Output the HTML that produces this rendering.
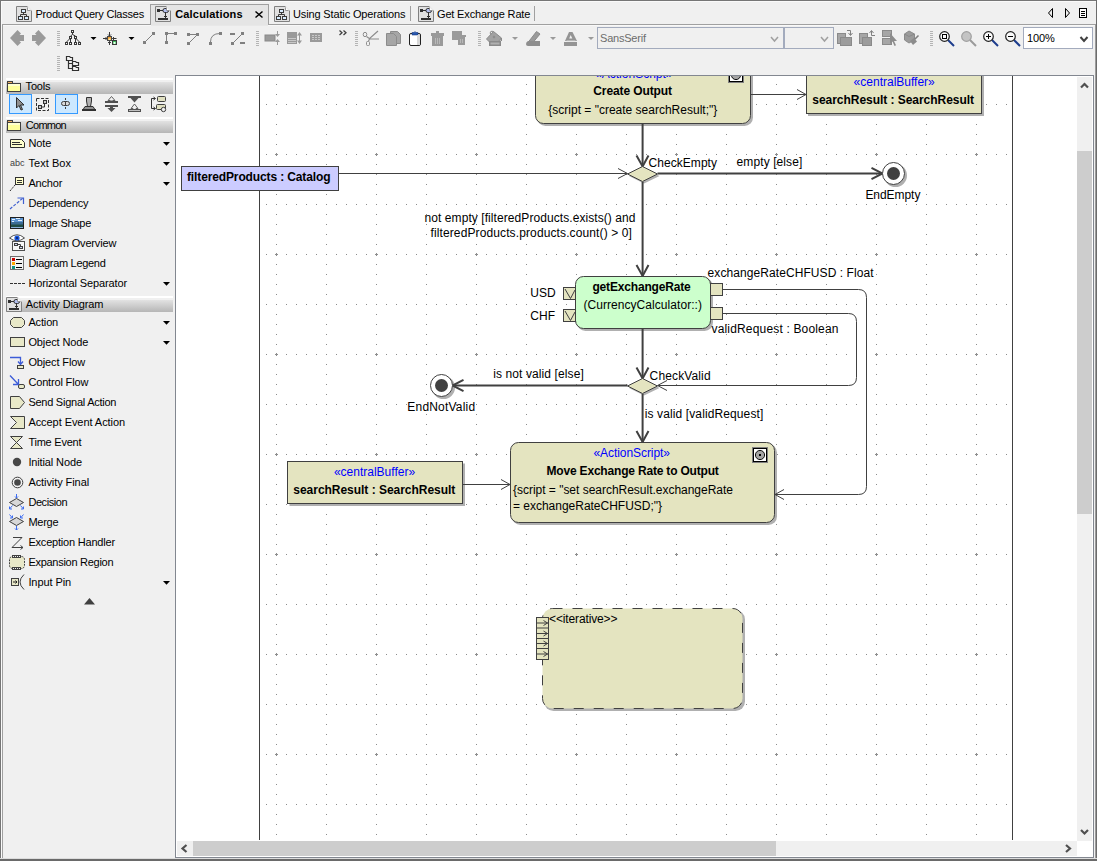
<!DOCTYPE html>
<html><head><meta charset="utf-8"><title>Calculations</title>
<style>
html,body{margin:0;padding:0}
body{width:1097px;height:861px;background:#f0f0f0;position:relative;overflow:hidden;font-family:"Liberation Sans",sans-serif;font-size:11px;color:#000}
.a{position:absolute}
.t{position:absolute;white-space:pre;line-height:14px;height:14px;letter-spacing:-0.2px}
.hdr{position:absolute;left:6px;width:167px;height:16px;background:linear-gradient(#fff 0,#fff 2px,#f0f0f0 2px,#f0f0f0 4px,#e2e2e2 4px,#b6b6b6 16px)}
.it{position:absolute;left:28px;white-space:pre;line-height:14px;height:14px;letter-spacing:-0.2px}
.dd{position:absolute;left:163px;margin-top:1px;width:0;height:0;border-left:3.5px solid transparent;border-right:3.5px solid transparent;border-top:4px solid #000}
.grip{position:absolute;width:3px;height:15px;background:repeating-linear-gradient(#b4b4b4 0,#b4b4b4 1px,transparent 1px,transparent 2px)}
.combo{position:absolute;top:27px;height:20px;border:1px solid #a3abbd;background:#f0f0f0}
svg{position:absolute;overflow:visible}
svg text{font-family:"Liberation Sans",sans-serif;font-size:12px;fill:#000}
</style></head><body>
<!-- window borders -->
<div class="a" style="left:0;top:0;width:1097px;height:1px;background:#767676"></div>
<div class="a" style="left:1px;top:1px;width:1095px;height:1px;background:#fafafa"></div>
<div class="a" style="left:0;top:0;width:1px;height:861px;background:#767676"></div>
<div class="a" style="left:1px;top:1px;width:1px;height:858px;background:#fafafa"></div>
<div class="a" style="left:2px;top:24px;width:1px;height:834px;background:#a0a0a0"></div>
<div class="a" style="left:1095px;top:24px;width:1px;height:834px;background:#9c9c9c"></div>
<div class="a" style="left:1096px;top:0;width:1px;height:861px;background:#6c6c6c"></div>
<div class="a" style="left:0;top:858px;width:1097px;height:1px;background:#dcdcdc"></div>
<div class="a" style="left:0;top:859px;width:1097px;height:2px;background:#6a6a6a"></div>

<!-- TABBAR -->
<div id="tabs">
<div class="a" style="left:2px;top:24px;width:1093px;height:1px;background:#a0a0a0"></div>
<div class="a" style="left:3px;top:25px;width:1092px;height:1px;background:#f8f8f8"></div>
<div class="a" style="left:150px;top:4px;width:117px;height:20px;background:#e5e5e5;border:1px solid #a0a0a0;border-bottom:none"></div>
<div class="a" style="left:151px;top:25px;width:117px;height:1px;background:#e8e8e8"></div>
<div class="t" style="left:35.5px;top:7px;letter-spacing:-0.219px">Product Query Classes</div>
<div class="t" style="left:175.2px;top:7px;font-weight:bold;letter-spacing:0.183px">Calculations</div>
<div class="t" style="left:293px;top:7px;letter-spacing:-0.138px">Using Static Operations</div>
<div class="t" style="left:437px;top:7px;letter-spacing:-0.166px">Get Exchange Rate</div>
<div class="a" style="left:410px;top:6px;width:1px;height:15px;background:#a0a0a0"></div>
<div class="a" style="left:534px;top:6px;width:1px;height:15px;background:#a0a0a0"></div>
</div>

<!-- TOOLBAR -->
<div id="toolbar">
<div class="grip" style="left:57px;top:31px"></div><div class="grip" style="left:256px;top:31px"></div><div class="grip" style="left:355px;top:31px"></div><div class="grip" style="left:478px;top:31px"></div><div class="grip" style="left:930px;top:31px"></div><div class="grip" style="left:57px;top:56px"></div>
<div class="combo" style="left:597px;width:185px"></div>
<div class="t" style="left:600px;top:31px;color:#6d6d6d;letter-spacing:-0.211px">SansSerif</div>
<div class="combo" style="left:784px;width:48px"></div>
<div class="combo" style="left:1023px;width:68px;background:#fff"></div>
<div class="t" style="left:1027px;top:31px;letter-spacing:-0.085px">100%</div>
</div>

<!-- PALETTE -->
<div id="palette">
<div class="hdr" style="top:78px"></div><div class="t" style="left:25.6px;top:79px;letter-spacing:-0.178px">Tools</div>
<div class="hdr" style="top:117px"></div><div class="t" style="left:25.8px;top:118px;letter-spacing:-0.737px">Common</div>
<div class="hdr" style="top:296px"></div><div class="t" style="left:25.8px;top:297px;letter-spacing:-0.117px">Activity Diagram</div>
<div class="it" style="left:28.4px;top:136px;letter-spacing:-0.112px">Note</div>
<div class="t" style="left:10px;top:156px;font-size:9px;color:#404040;letter-spacing:0">abc</div><div class="it" style="left:28.4px;top:156px;letter-spacing:0.064px">Text Box</div>
<div class="it" style="left:28.4px;top:176px;letter-spacing:-0.177px">Anchor</div>
<div class="it" style="left:28.4px;top:196px;letter-spacing:-0.178px">Dependency</div>
<div class="it" style="left:28.4px;top:216px;letter-spacing:-0.249px">Image Shape</div>
<div class="it" style="left:28.4px;top:236px;letter-spacing:-0.167px">Diagram Overview</div>
<div class="it" style="left:28.4px;top:256px;letter-spacing:-0.303px">Diagram Legend</div>
<div class="it" style="left:28.4px;top:276px;letter-spacing:-0.115px">Horizontal Separator</div>
<div class="it" style="left:28.4px;top:315px;letter-spacing:-0.146px">Action</div>
<div class="it" style="left:28.4px;top:335px;letter-spacing:-0.123px">Object Node</div>
<div class="it" style="left:28.4px;top:355px;letter-spacing:-0.134px">Object Flow</div>
<div class="it" style="left:28.4px;top:375px;letter-spacing:-0.162px">Control Flow</div>
<div class="it" style="left:28.4px;top:395px;letter-spacing:-0.253px">Send Signal Action</div>
<div class="it" style="left:28.4px;top:415px;letter-spacing:-0.06px">Accept Event Action</div>
<div class="it" style="left:28.4px;top:435px;letter-spacing:-0.233px">Time Event</div>
<div class="it" style="left:28.4px;top:455px;letter-spacing:-0.129px">Initial Node</div>
<div class="it" style="left:28.4px;top:475px;letter-spacing:-0.075px">Activity Final</div>
<div class="it" style="left:28.4px;top:495px;letter-spacing:-0.423px">Decision</div>
<div class="it" style="left:28.4px;top:515px;letter-spacing:-0.258px">Merge</div>
<div class="it" style="left:28.4px;top:535px;letter-spacing:-0.199px">Exception Handler</div>
<div class="it" style="left:28.4px;top:555px;letter-spacing:-0.275px">Expansion Region</div>
<div class="it" style="left:28.4px;top:575px;letter-spacing:-0.08px">Input Pin</div>
</div>

<!-- CANVAS -->
<div class="a" id="canvas" style="left:175px;top:75px;width:917px;height:781px;border:1px solid #828790;background:#fff;overflow:hidden">
<svg id="dg" width="917" height="781" viewBox="176 76 917 781" style="left:0;top:0">
<defs>
<pattern id="g50" x="276" y="104" width="50" height="50" patternUnits="userSpaceOnUse">
<g fill="#8c8c8c"><rect x="0" y="0" width="1" height="1"/><rect x="10" y="0" width="1" height="1"/><rect x="20" y="0" width="1" height="1"/><rect x="30" y="0" width="1" height="1"/><rect x="40" y="0" width="1" height="1"/><rect x="0" y="10" width="1" height="1"/><rect x="0" y="20" width="1" height="1"/><rect x="0" y="30" width="1" height="1"/><rect x="0" y="40" width="1" height="1"/></g>
</pattern>
<pattern id="g100" x="275" y="153" width="100" height="100" patternUnits="userSpaceOnUse">
<g fill="#8c8c8c"><rect x="0" y="1" width="3" height="1"/><rect x="1" y="0" width="1" height="3"/></g>
</pattern>
</defs>
<rect x="266" y="76" width="741" height="765" fill="url(#g50)"/>
<rect x="266" y="76" width="741" height="765" fill="url(#g100)"/>
<g id="frame" stroke="#404040" stroke-width="1" fill="none">
<line x1="259.5" y1="76" x2="259.5" y2="840"/><line x1="1012.5" y1="76" x2="1012.5" y2="840"/>
</g>
<g id="shadows" fill="#b0b0b0" stroke="none">
<rect x="537" y="62" width="216" height="64" rx="8.5"/>
<rect x="808" y="73" width="176" height="43"/>
<rect x="577" y="278" width="136" height="53" rx="8.5"/>
<rect x="512" y="444" width="265" height="81" rx="8.5"/>
<rect x="289.5" y="463.5" width="175.5" height="42.5"/>
<rect x="544" y="610" width="201" height="101" rx="9.5"/>
<path d="M629 176 L644 168.5 L659.5 176 L644 183.5 Z"/>
<path d="M629 388 L644 380.5 L659.5 388 L644 395.5 Z"/>
<circle cx="895.5" cy="175.5" r="11.5"/><circle cx="443.5" cy="387.5" r="11.5"/>
</g>
<g id="edges" stroke="#404040" fill="none">
<g stroke-width="1">
<path d="M751 94.5 H806"/><path d="M797 89.5 L806 94.5 L797 99.5"/>
<path d="M339 173.5 H627"/><path d="M618 168.5 L627.5 173.5 L618 178.5"/>
<path d="M463 484.5 H510"/><path d="M501 479.5 L510 484.5 L501 489.5"/>
<path d="M723 289.5 H858.5 Q866.5 289.5 866.5 297.5 V486.5 Q866.5 494.5 858.5 494.5 H775"/><path d="M784 489.5 L775 494.5 L784 499.5"/>
<path d="M723 313.5 H848.5 Q856.5 313.5 856.5 321.5 V377.5 Q856.5 385.5 848.5 385.5 H658"/><path d="M667 380.5 L657.5 385.5 L667 390.5"/>
</g>
<g stroke-width="2">
<path d="M642.6 124 V166"/><path d="M636.5 155.5 L642.6 166.5 L648.5 155.5"/>
<path d="M642.6 182 V276"/><path d="M636.5 265 L642.6 276 L648.5 265"/>
<path d="M642.6 329 V378"/><path d="M636.5 367.5 L642.6 378.5 L648.5 367.5"/>
<path d="M642.6 394 V442"/><path d="M636.5 431 L642.6 442 L648.5 431"/>
<path d="M657.5 173.5 H882"/><path d="M871.5 167.8 L882.5 173.5 L871.5 179.2"/>
<path d="M627.5 385.5 H453"/><path d="M463.5 379.8 L452.5 385.5 L463.5 391.2"/>
</g>
</g>
<g id="nodes" stroke="#404040" stroke-width="1">
<rect x="535.5" y="60.5" width="215" height="63" rx="8" fill="#e4e4c0"/>
<rect x="806.5" y="71.5" width="175" height="42" fill="#e4e4c0"/>
<rect x="181.5" y="166.5" width="157" height="24" fill="#ccccff"/>
<rect x="575.5" y="276.5" width="135" height="52" rx="8" fill="#ccffcc"/>
<rect x="510.5" y="442.5" width="264" height="80" rx="8" fill="#e4e4c0"/>
<rect x="287.5" y="461.5" width="175" height="42" fill="#e4e4c0"/>
<rect x="542.5" y="608.5" width="200" height="100" rx="10" fill="#e4e4c0" stroke-dasharray="10 10"/>
<path d="M627.5 174 L642.5 166.5 L657.5 174 L642.5 181.5 Z" fill="#e4e4c0"/>
<path d="M627.5 386 L642.5 378.5 L657.5 386 L642.5 393.5 Z" fill="#e4e4c0"/>
<rect x="563.5" y="287.5" width="12" height="12" fill="#e4e4c0"/><path d="M565 289 L570.5 298.5 L575 290" fill="none"/>
<rect x="563.5" y="309.5" width="12" height="12" fill="#e4e4c0"/><path d="M565 311 L570.5 320.5 L575 312" fill="none"/>
<rect x="710.5" y="283.5" width="12" height="12" fill="#e4e4c0"/>
<rect x="710.5" y="307.5" width="12" height="12" fill="#e4e4c0"/>
<circle cx="893.5" cy="173.5" r="11" fill="#fff"/><circle cx="893.5" cy="173.5" r="6.5" fill="#404040" stroke="none"/>
<circle cx="441.5" cy="385.5" r="11" fill="#fff"/><circle cx="441.5" cy="385.5" r="6.5" fill="#404040" stroke="none"/>
<rect x="536.5" y="617.5" width="12" height="42" fill="#e4e4c0"/>
<path d="M536.5 628 H548.5 M536.5 638.5 H548.5 M536.5 648.5 H548.5" fill="none"/>
<path d="M537 623 H548 M543.5 620.5 L547.5 623 L543.5 625.5 M537 633.5 H548 M543.5 631 L547.5 633.5 L543.5 636 M537 643.5 H548 M543.5 641 L547.5 643.5 L543.5 646 M537 654 H548 M543.5 651.5 L547.5 654 L543.5 656.5" fill="none"/>
<g id="bicon1"><rect x="728.5" y="67.5" width="15" height="15" fill="#000" stroke="#808080"/><rect x="730" y="69" width="12" height="12" fill="#fff" stroke="none"/><circle cx="736" cy="75" r="4.6" fill="#a4a4a4" stroke="#101010"/><rect x="735" y="74" width="2" height="2" fill="#000" stroke="none"/></g>
<g id="bicon2"><rect x="752.5" y="447.5" width="15" height="15" fill="#000" stroke="#808080"/><rect x="754" y="449" width="12" height="12" fill="#fff" stroke="none"/><circle cx="760" cy="455" r="4.6" fill="#a4a4a4" stroke="#101010"/><rect x="759" y="454" width="2" height="2" fill="#000" stroke="none"/></g>
</g>
<g id="labels">
<text x="633.8" y="78" text-anchor="middle" style="fill:#0000ff">«ActionScript»</text>
<text x="593.3" y="95" font-weight="bold" textLength="78.7">Create Output</text>
<text x="548.3" y="114">{script = "create searchResult;"}</text>
<text x="894.2" y="86" text-anchor="middle" style="fill:#0000ff">«centralBuffer»</text>
<text x="812.3" y="104" font-weight="bold" textLength="161.7">searchResult : SearchResult</text>
<text x="187" y="181" font-weight="bold" textLength="143.5">filteredProducts : Catalog</text>
<text x="648.6" y="167" textLength="68.4">CheckEmpty</text>
<text x="736.6" y="166" textLength="65.7">empty [else]</text>
<text x="865.4" y="199" textLength="55">EndEmpty</text>
<text x="424.5" y="222" textLength="211">not empty [filteredProducts.exists() and</text>
<text x="430.5" y="237" textLength="201.4">filteredProducts.products.count() &gt; 0]</text>
<text x="592.4" y="291" font-weight="bold" textLength="98.4">getExchangeRate</text>
<text x="583.4" y="309" textLength="118.6">(CurrencyCalculator::)</text>
<text x="530.3" y="297">USD</text>
<text x="530.3" y="320">CHF</text>
<text x="707.6" y="277" textLength="166">exchangeRateCHFUSD : Float</text>
<text x="711.5" y="333" textLength="127">validRequest : Boolean</text>
<text x="649.6" y="380" textLength="61">CheckValid</text>
<text x="493.2" y="378" textLength="90.6">is not valid [else]</text>
<text x="407.3" y="411" textLength="67.8">EndNotValid</text>
<text x="644.8" y="418" textLength="118.5">is valid [validRequest]</text>
<text x="593.5" y="457" style="fill:#0000ff" textLength="76.5">«ActionScript»</text>
<text x="546.5" y="475" font-weight="bold" textLength="172.3">Move Exchange Rate to Output</text>
<text x="513" y="494" textLength="220">{script = "set searchResult.exchangeRate</text>
<text x="513" y="510" textLength="149">= exchangeRateCHFUSD;"}</text>
<text x="374.5" y="476" text-anchor="middle" style="fill:#0000ff">«centralBuffer»</text>
<text x="293.3" y="494" font-weight="bold" textLength="162">searchResult : SearchResult</text>
<text x="549" y="623" textLength="68.5">&lt;&lt;iterative&gt;&gt;</text>
</g>

</svg>
</div>

<!-- SCROLLBARS -->
<div id="scroll">
<div class="a" style="left:1077px;top:77px;width:15px;height:764px;background:#f0f0f0"></div>
<div class="a" style="left:1077px;top:151px;width:15px;height:363px;background:#cdcdcd"></div>
<div class="a" style="left:177px;top:841px;width:900px;height:15px;background:#f0f0f0"></div>
<div class="a" style="left:193px;top:841px;width:583px;height:15px;background:#cdcdcd"></div>
<div class="a" style="left:1077px;top:841px;width:16px;height:16px;background:#fff"></div>
</div>
<svg id="icons" width="1097" height="861" viewBox="0 0 1097 861" style="left:0;top:0;pointer-events:none">
<!-- ===== tab icons ===== -->
<g id="tabicons">
<!-- class diagram icon @16,6 -->
<g transform="translate(16,6)">
<path d="M0.5 0.5 H11.5 L15.5 4.5 V15.5 H0.5 Z" fill="#e1e1e1" stroke="#808080"/>
<g fill="#d8ecff" stroke="#3c3c3c"><rect x="5.5" y="3.5" width="4" height="3"/><rect x="2.5" y="10.5" width="4" height="3"/><rect x="8.5" y="10.5" width="4" height="3"/><path d="M11.5 0.5 V4.5 H15.5 Z" fill="#fff" stroke="#808080" stroke-width="0.8"/><path d="M11.5 0.5 L15.5 4.5" stroke="#e8e8e8" stroke-width="1.2"/>
</g>
<path d="M7.5 7 V8.5 M4.5 10 V8.5 H10.5 V10" fill="none" stroke="#3c3c3c"/>
</g>
<g transform="translate(274,6)">
<path d="M0.5 0.5 H11.5 L15.5 4.5 V15.5 H0.5 Z" fill="#e1e1e1" stroke="#808080"/>
<g fill="#d8ecff" stroke="#3c3c3c"><rect x="5.5" y="3.5" width="4" height="3"/><rect x="2.5" y="10.5" width="4" height="3"/><rect x="8.5" y="10.5" width="4" height="3"/><path d="M11.5 0.5 V4.5 H15.5 Z" fill="#fff" stroke="#808080" stroke-width="0.8"/><path d="M11.5 0.5 L15.5 4.5" stroke="#e8e8e8" stroke-width="1.2"/>
</g>
<path d="M7.5 7 V8.5 M4.5 10 V8.5 H10.5 V10" fill="none" stroke="#3c3c3c"/>
</g>
<!-- activity diagram icon -->
<g transform="translate(155,6)">
<path d="M0.5 0.5 H11.5 L15.5 4.5 V15.5 H0.5 Z" fill="#e1e1e1" stroke="#808080"/>
<rect x="2" y="3" width="3" height="3" fill="#303030"/><path d="M5 4.5 H8" stroke="#303030" fill="none"/>
<rect x="8" y="2.5" width="5.5" height="4" rx="1.8" fill="#b4c0f0" stroke="#303030"/>
<path d="M10.5 7 V12.5 M9 10.5 H12" stroke="#303030" fill="none"/><rect x="3" y="12" width="10" height="2" fill="#303030"/>
<path d="M11.5 0.5 V4.5 H15.5 Z" fill="#fff" stroke="#808080" stroke-width="0.8"/><path d="M11.5 0.5 L15.5 4.5" stroke="#e8e8e8" stroke-width="1.2"/>
</g>
<g transform="translate(418,6)">
<path d="M0.5 0.5 H11.5 L15.5 4.5 V15.5 H0.5 Z" fill="#e1e1e1" stroke="#808080"/>
<rect x="2" y="3" width="3" height="3" fill="#303030"/><path d="M5 4.5 H8" stroke="#303030" fill="none"/>
<rect x="8" y="2.5" width="5.5" height="4" rx="1.8" fill="#b4c0f0" stroke="#303030"/>
<path d="M10.5 7 V12.5 M9 10.5 H12" stroke="#303030" fill="none"/><rect x="3" y="12" width="10" height="2" fill="#303030"/>
<path d="M11.5 0.5 V4.5 H15.5 Z" fill="#fff" stroke="#808080" stroke-width="0.8"/><path d="M11.5 0.5 L15.5 4.5" stroke="#e8e8e8" stroke-width="1.2"/>
</g>
<g transform="translate(6,297)">
<path d="M0.5 0.5 H11.5 L15.5 4.5 V14.5 H0.5 Z" fill="#e1e1e1" stroke="#808080"/>
<rect x="2" y="3" width="3" height="3" fill="#303030"/><path d="M5 4.5 H8" stroke="#303030" fill="none"/>
<rect x="8" y="2.5" width="5.5" height="4" rx="1.8" fill="#b4c0f0" stroke="#303030"/>
<path d="M10.5 7 V11.5 M9 9.5 H12" stroke="#303030" fill="none"/><rect x="3" y="11" width="10" height="2" fill="#303030"/>
<path d="M11.5 0.5 V4.5 H15.5 Z" fill="#fff" stroke="#808080" stroke-width="0.8"/><path d="M11.5 0.5 L15.5 4.5" stroke="#e8e8e8" stroke-width="1.2"/>
</g>
<!-- close X -->
<path d="M255.5 11.5 L262.5 17.5 M262.5 11.5 L255.5 17.5" stroke="#000" stroke-width="1.5" fill="none"/>
<!-- nav arrows -->
<path d="M1052.5 8.5 L1048.5 13 L1052.5 17.5 Z" fill="#f0f0f0" stroke="#000"/>
<path d="M1065.5 8.5 L1069.5 13 L1065.5 17.5 Z" fill="#f0f0f0" stroke="#000"/>
<rect x="1079.5" y="8.5" width="7" height="9" fill="#fff" stroke="#000"/><path d="M1081 11.5 H1085 M1081 13.5 H1085 M1081 15.5 H1085" stroke="#000" fill="none"/>
</g>
<!-- ===== toolbar row 1 ===== -->
<g id="tb1">
<path d="M10 38 L17.5 30 L21 33.5 L19.5 35 H24 V41 H19.5 L21 42.5 L17.5 46 Z" fill="#9a9a9a"/>
<path d="M46 38 L38.5 30 L35 33.5 L36.5 35 H32 V41 H36.5 L35 42.5 L38.5 46 Z" fill="#9a9a9a"/>
<!-- tree icon -->
<g stroke="#383838" fill="#f4f4f4">
<path d="M72.5 33 V34.5 L70.5 36 M72.5 34.5 L75.5 36 M70.5 39 V42 M75.5 39 V42 M69.5 39 L66.5 42 M76.5 39 L79.5 42" fill="none"/>
<rect x="71.5" y="30.5" width="2" height="2"/><rect x="69.5" y="36.5" width="2" height="2"/><rect x="74.5" y="36.5" width="2" height="2"/>
<rect x="65.5" y="42.5" width="2" height="2"/><rect x="69.5" y="42.5" width="2" height="2"/><rect x="74.5" y="42.5" width="2" height="2"/><rect x="78.5" y="42.5" width="2" height="2"/>
</g>
<path d="M90.5 37 H96.5 L93.5 40 Z" fill="#000"/>
<!-- layout icon -->
<g stroke="#383838" fill="none"><path d="M109.5 32 V36 M108 34.5 L109.5 36 L111 34.5 M109.5 45 V41.5 M108 43 L109.5 41.5 L111 43 M103 38.5 H107 M105.5 37 L107 38.5 L105.5 40 M116.5 38.5 H112.5 M114 37 L112.5 38.5 L114 40"/></g>
<rect x="107.5" y="36.5" width="4" height="4" fill="#f0a030" stroke="#484848"/><rect x="108.5" y="38.5" width="2" height="1.5" fill="#fff0b0"/>
<rect x="112.5" y="40.5" width="4" height="4" fill="#38b858" stroke="#383838"/><rect x="113.5" y="42" width="2" height="2" fill="#e8ffe8"/>
<path d="M128.5 37 H134.5 L131.5 40 Z" fill="#000"/>
<!-- path style icons -->
<g fill="#808080" stroke="none">
<rect x="143" y="41" width="3" height="3"/><rect x="152" y="32" width="3" height="3"/>
<rect x="165" y="32" width="3" height="3"/><rect x="174" y="32" width="3" height="3"/><rect x="165" y="41" width="3" height="3"/>
<rect x="187" y="33" width="3" height="3"/><rect x="196" y="33" width="3" height="3"/><rect x="187" y="42" width="3" height="3"/>
<rect x="209" y="42" width="3" height="3"/><rect x="219" y="32" width="3" height="3"/>
<rect x="231" y="42" width="3" height="3"/><rect x="241" y="32" width="3" height="3"/>
<rect x="230" y="33" width="5" height="2"/><rect x="240" y="42" width="5" height="2"/>
</g>
<g stroke="#808080" fill="none">
<path d="M145 42 L153 34"/><path d="M166.5 42 V33.5 H175"/><path d="M189 34.5 H197 M189 43 L197 35"/>
<path d="M210.5 42 Q210.5 33.5 220 33.5"/><path d="M233 43 L242 34"/>
</g>
<!-- align icons -->
<g fill="#9a9a9a" stroke="none">
<rect x="265" y="35" width="10" height="6" stroke="#888"/>
<path d="M275 34 H280 L277.5 37 Z M275 42 H280 L277.5 39 Z"/><rect x="277" y="31" width="1" height="3"/><rect x="277" y="42" width="1" height="3"/>
<rect x="287" y="32" width="10" height="12"/>
<path d="M297 35.5 H302 L299.5 32 Z M297 40.5 H302 L299.5 44 Z"/><rect x="299" y="35" width="1" height="6"/>
<rect x="310" y="33" width="12" height="9"/>
</g>
<g stroke="#c8c8c8" fill="none"><path d="M288 38.5 H296 M288 40.5 H296 M288 42.5 H296"/><path d="M312 35.5 H314 M315 35.5 H317 M318 35.5 H320 M312 37.5 H314 M315 37.5 H317 M318 37.5 H320 M312 39.5 H314 M315 39.5 H317 M318 39.5 H320"/></g>
<path d="M339.5 30.5 L342 32.75 L339.5 35 M343.5 30.5 L346 32.75 L343.5 35" stroke="#404040" stroke-width="1.3" fill="none"/>
<!-- scissors -->
<g stroke="#8c8c8c" fill="none"><ellipse cx="365" cy="34.5" rx="1.8" ry="2.2"/><rect x="366.5" y="41.5" width="3" height="4" rx="1"/><path d="M366.5 36.5 L370 39 H379 M368.5 41 L370 38 L378 31" stroke-width="1.2"/></g>
<!-- copy -->
<g fill="#a6a6a6" stroke="#8c8c8c"><path d="M390.5 31.5 H397.5 L400.5 34.5 V43.5 H390.5 Z"/><path d="M386.5 33.5 H393.5 L396.5 36.5 V45.5 H386.5 Z"/></g>
<!-- paste -->
<rect x="409.5" y="33.5" width="11" height="12" rx="1.5" fill="#fff" stroke="#202020"/><path d="M412 35 V32.5 H414 L415 31.5 L416 32.5 H418 V35 Z" fill="#2858b0" stroke="#1c3c80" stroke-width="0.6"/>
<rect x="417" y="35" width="3" height="10" fill="#d8d8d8"/>
<!-- trash -->
<g fill="#9a9a9a"><rect x="431" y="33" width="13" height="3"/><rect x="436" y="31" width="3" height="2"/><rect x="432" y="36" width="11" height="10"/></g>
<path d="M435.5 38 V44 M437.5 38 V44 M439.5 38 V44" stroke="#b8b8b8" fill="none"/>
<g fill="#9a9a9a"><rect x="452" y="31" width="10" height="9"/><rect x="457" y="35" width="9" height="2" /><rect x="458" y="37" width="7" height="8"/></g>
<path d="M460.5 39 V43 M462.5 39 V43" stroke="#b8b8b8" fill="none"/>
<!-- fill bucket -->
<circle cx="492" cy="33" r="1.8" fill="none" stroke="#8c8c8c"/>
<path d="M486.5 39 L493.5 31.5 L501.5 38 L498 42 H489.5 Z" fill="#a2a2a2" stroke="#8a8a8a"/><path d="M494 35.5 L495.5 37 L494 38.5 L492.5 37 Z" fill="#8a8a8a"/>
<rect x="500.5" y="38" width="1.5" height="3" fill="#8a8a8a"/>
<rect x="489" y="41" width="12" height="5" fill="#8a8a8a"/><rect x="490.5" y="42.5" width="9" height="2" fill="#b0b0b0"/>
<path d="M512 37 H518 L515 40 Z" fill="#9a9a9a"/>
<!-- pen -->
<g fill="#9a9a9a"><path d="M528 42.5 L536.5 31.5 L540 34 L533 42.5 Z" stroke="#8a8a8a"/><path d="M528 41 H540 V46 H528 Q526 46 526 44 Q526 42 528 41 Z" fill="#8e8e8e"/></g>
<path d="M550 37 H556 L553 40 Z" fill="#9a9a9a"/>
<!-- A -->
<g fill="#949494"><path d="M569 32 H572.5 L577 41 H565 Z"/><rect x="564" y="42" width="13" height="4"/></g>
<path d="M569.2 38.5 L570.7 35 L572.3 38.5 Z" fill="#f0f0f0"/><rect x="566.5" y="40.2" width="9" height="1" fill="#c0c0c0"/>
<path d="M588 37 H594 L591 40 Z" fill="#9a9a9a"/>
<!-- combo chevrons -->
<path d="M771 37 L774.5 41 L778 37" stroke="#a0a0a0" stroke-width="1.5" fill="none"/>
<path d="M821 37 L824.5 41 L828 37" stroke="#a0a0a0" stroke-width="1.5" fill="none"/>
<path d="M1080.5 37 L1084 41 L1087.5 37" stroke="#404040" stroke-width="2" fill="none"/>
<!-- order icons -->
<g fill="#a6a6a6" stroke="#8a8a8a"><rect x="837.5" y="33.5" width="8" height="10"/><rect x="840.5" y="37.5" width="11" height="8" fill="#9c9c9c"/>
<rect x="859.5" y="33.5" width="8" height="10"/><rect x="862.5" y="37.5" width="9" height="8" fill="#9c9c9c"/>
<rect x="882.5" y="30.5" width="9" height="6"/><rect x="882.5" y="38.5" width="9" height="6"/></g>
<path d="M847 30.5 H850.5 V35 M848.5 33 L850.5 35.5 L852.5 33" stroke="#808080" fill="none"/>
<path d="M871.5 35.5 V31 M869.5 33 L871.5 30.5 L873.5 33 M871.5 35.5 H875" stroke="#808080" fill="none"/>
<path d="M890 33 V44 L892.5 41.5 L894.5 46 L896 45.2 L894 41 H897 Z" fill="#8c8c8c"/>
<path d="M904.5 34 L909 31 L914.5 34 V40 L909 43 L904.5 40 Z" fill="#9c9c9c" stroke="#8a8a8a"/><path d="M904.5 34 L909 36.5 L914.5 34" fill="none" stroke="#8a8a8a"/>
<path d="M918.5 35.5 L914 40" stroke="#808080" stroke-width="1.6" fill="none"/><path d="M910 41 L914 38 L917 41.5 L913 45 Z" fill="#8c8c8c"/>
<!-- zoom icons -->
<g fill="none">
<path d="M948 40 L954 46" stroke="#1c3c8c" stroke-width="2"/><circle cx="944.5" cy="36.5" r="4.8" fill="#fafafa" stroke="#202020" stroke-width="1.2"/><rect x="942.5" y="34.5" width="4" height="4" stroke="#000"/>
<path d="M970 40 L976 46" stroke="#9a9a9a" stroke-width="2"/><circle cx="966.5" cy="36.5" r="4.8" fill="#c4c4c4" stroke="#a0a0a0" stroke-width="1.2"/>
<path d="M992 40 L998 46" stroke="#1c3c8c" stroke-width="2"/><circle cx="988.5" cy="36.5" r="4.8" fill="#fafafa" stroke="#202020" stroke-width="1.2"/><path d="M986 36.5 H991 M988.5 34 V39" stroke="#000"/>
<path d="M1014 40 L1020 46" stroke="#1c3c8c" stroke-width="2"/><circle cx="1010.5" cy="36.5" r="4.8" fill="#fafafa" stroke="#202020" stroke-width="1.2"/><path d="M1008 36.5 H1013" stroke="#000"/>
</g>
<!-- row 2 icon -->
<g fill="#f4f4f4" stroke="#303030" stroke-width="1.2"><path d="M66.5 56.5 H69.5 L70.5 57.5 H72.5 V60.5 H66.5 Z"/><path d="M72.5 61.5 H75.5 L76.5 62.5 H78.5 V65.5 H72.5 Z"/><path d="M72.5 66.5 H75.5 L76.5 67.5 H78.5 V70.5 H72.5 Z"/><path d="M68.5 61 V68.5 H72 M68.5 63.5 H72" fill="none"/></g>
</g>
<!-- ===== palette ===== -->
<g id="pal">
<!-- folders -->
<g id="fold1"><rect x="7.5" y="81.5" width="5" height="2" fill="#f0b060" stroke="#404040"/><rect x="7.5" y="83.5" width="13" height="8" fill="#ffff9c" stroke="#404040"/><rect x="8" y="84" width="12" height="2" fill="#ffffd0"/></g>
<g id="fold2"><rect x="7.5" y="120.5" width="5" height="2" fill="#f0b060" stroke="#404040"/><rect x="7.5" y="122.5" width="13" height="8" fill="#ffff9c" stroke="#404040"/><rect x="8" y="123" width="12" height="2" fill="#ffffd0"/></g>
<!-- tools row -->
<rect x="9.5" y="94.5" width="22" height="19" fill="#cce8ff" stroke="#3399ff"/>
<rect x="55.5" y="94.5" width="22" height="19" fill="#cce8ff" stroke="#3399ff"/>
<path d="M16.5 97.5 V108 L19 105.5 L21 110 L22.5 109.5 L20.5 105 H24 Z" fill="#909090" stroke="#202020" stroke-width="0.9"/>
<rect x="36.5" y="98.5" width="12" height="12" fill="none" stroke="#303030" stroke-dasharray="3 1.5"/>
<rect x="43.5" y="100.5" width="3" height="3" fill="#c8c8c8" stroke="#303030"/><rect x="38.5" y="105.5" width="3" height="3" fill="#c8c8c8" stroke="#303030"/><path d="M42 107 H44.5 V104" fill="none" stroke="#303030"/>
<rect x="61.5" y="101.5" width="8" height="4" rx="2" fill="#d8d8d8" stroke="#404040"/><path d="M65.5 98 V100 M65.5 107 V109 M65.5 102 V105" stroke="#404040" fill="none"/>
<!-- stamp -->
<g fill="#808080" stroke="#303030"><path d="M86.5 97.5 H91.5 V101 L90.5 106.5 H87.5 L86.5 101 Z" fill="#b0b0b0"/><path d="M82.5 110.5 L85 106.5 H93 L95.5 110.5 Z" fill="#909090"/></g><rect x="82" y="109" width="14" height="2" fill="#303030"/>
<!-- icon5 -->
<g fill="#505050"><rect x="105" y="101" width="13" height="2"/><rect x="105" y="105" width="13" height="2"/><path d="M107.5 108 H115.5 L111.5 112 Z"/><rect x="110" y="107" width="3" height="2"/></g>
<path d="M108 100.5 L111.5 96.5 L115 100.5 H113 V101 H110 V100.5 Z" fill="#f0f0f0" stroke="#505050" stroke-width="0.9"/>
<!-- icon6 -->
<g fill="#505050"><rect x="128" y="96" width="13" height="2"/><path d="M130.5 98 H138.5 L134.5 102.5 Z"/></g>
<path d="M131 108.5 L134.5 104 L138 108.5 H136 V109.5 H133 V108.5 Z" fill="#f0f0f0" stroke="#505050" stroke-width="0.9"/><rect x="128.5" y="109.5" width="12" height="2" fill="#c0c0c0" stroke="#505050"/>
<!-- icon7 -->
<path d="M155 98.5 H151.5 V108.5 H155 M153.5 97 L155.5 98.5 L153.5 100 M153.5 107 L155.5 108.5 L153.5 110" fill="none" stroke="#303030"/>
<rect x="157.5" y="96.5" width="8" height="5" rx="1" fill="#e0e0c0" stroke="#404040"/><rect x="156.5" y="104.5" width="9" height="5" rx="1" fill="#e0e0c0" stroke="#404040"/><circle cx="163.5" cy="109.5" r="2.2" fill="#f0f0f0" stroke="#404040"/>
<!-- Note -->
<path d="M10.5 139.5 H21.5 L24.5 142.5 V147.5 H10.5 Z" fill="#ffffcc" stroke="#303030"/><path d="M12 142.5 H20 M12 144.5 H22" stroke="#303030" fill="none"/>
<!-- Anchor -->
<rect x="15.5" y="177.5" width="8" height="7" fill="#ffffcc" stroke="#303030"/><path d="M17 180.5 H22 M17 182.5 H22" stroke="#303030" fill="none"/><path d="M10 191 L15 185" stroke="#303030" stroke-dasharray="2 1" fill="none"/>
<!-- Dependency -->
<path d="M10 209 L23 198" stroke="#4060d0" stroke-dasharray="3 1.5" stroke-width="1.2" fill="none"/><path d="M17.5 198 H23.5 V204" stroke="#4060d0" stroke-width="1.2" fill="none"/>
<!-- Image Shape -->
<rect x="10.5" y="217.5" width="13" height="11" fill="#3c70a8" stroke="#202020"/><rect x="11" y="218" width="12" height="4" fill="#5c94d0"/><path d="M12 219.5 H15 M16 218.5 H20 M18 220.5 H22 M12 221.5 H14" stroke="#e4f0fc" fill="none"/><rect x="11" y="222" width="12" height="3" fill="#3c6c94"/><rect x="11" y="224.5" width="12" height="2.5" fill="#204c44"/><rect x="11" y="227" width="12" height="1" fill="#88b0d8"/>
<!-- Diagram Overview -->
<rect x="12.5" y="241.5" width="12" height="9" fill="#f8f8f8" stroke="#505050"/><rect x="14.5" y="243.5" width="3" height="2" fill="#d0d8f0" stroke="#404040"/><rect x="19.5" y="246.5" width="3" height="2" fill="#d0d8f0" stroke="#404040"/><path d="M18 244.5 H20.5 V246" stroke="#404040" fill="none"/>
<path d="M9.5 238 Q17 231.5 24.5 238 Q17 243.5 9.5 238 Z" fill="#fff" stroke="#505050"/><circle cx="17" cy="238" r="2.6" fill="#1858e0"/><circle cx="17" cy="238" r="1.1" fill="#102060"/>
<!-- Diagram Legend -->
<rect x="10.5" y="256.5" width="13" height="13" fill="#f4f4f4" stroke="#707070"/><rect x="12" y="258" width="3" height="3" fill="#c80000"/><rect x="12" y="262" width="3" height="3" fill="#ffa800"/><rect x="12" y="266" width="3" height="3" fill="#109080"/><path d="M16 259.5 H22 M16 263.5 H22 M16 267.5 H22" stroke="#000" fill="none"/>
<!-- Horizontal Separator -->
<path d="M10 283.5 H25" stroke="#303030" stroke-dasharray="3 1" fill="none"/>
<!-- Action -->
<path d="M13.5 317.5 H21.5 L24.5 320.5 V324.5 L21.5 327.5 H13.5 L10.5 324.5 V320.5 Z" fill="#e8e8c8" stroke="#404040"/>
<!-- Object Node -->
<rect x="10.5" y="337.5" width="14" height="9" fill="#e8e8c8" stroke="#404040"/>
<!-- Object Flow -->
<path d="M10 357.5 H20.5 V364 M18 361.5 L20.5 364.5 L23 361.5" stroke="#3c5cd8" stroke-width="1.3" fill="none"/><rect x="17.5" y="365.5" width="6" height="3" fill="#e8e8c8" stroke="#404040"/>
<!-- Control Flow -->
<path d="M10 375.5 L18 384 M18.5 379 V384.5 H13" stroke="#3c5cd8" stroke-width="1.3" fill="none"/><rect x="18.5" y="384.5" width="6" height="4" rx="1.5" fill="#e8e8c8" stroke="#404040"/>
<!-- Send Signal -->
<path d="M10.5 396.5 H19.5 L24.5 402.5 L19.5 408.5 H10.5 Z" fill="#e8e8c8" stroke="#404040"/>
<!-- Accept Event -->
<path d="M10.5 416.5 H24.5 V428.5 H10.5 L16.5 422.5 Z" fill="#e8e8c8" stroke="#404040"/>
<!-- Time Event -->
<path d="M10.5 436.5 H22.5 L10.5 448.5 H22.5 Z" fill="#e8e8c8" stroke="#404040"/>
<!-- Initial -->
<circle cx="17" cy="462" r="4.2" fill="#484848"/>
<!-- Final -->
<circle cx="17.5" cy="482.5" r="5.3" fill="#f4f4f4" stroke="#404040"/><circle cx="17.5" cy="482.5" r="3.3" fill="#484848"/>
<!-- Decision -->
<path d="M9.5 502.5 L16.5 498.5 L23.5 502.5 L16.5 506.5 Z" fill="#d8d8d8" stroke="#404040"/>
<path d="M16.5 494 V498 M15 496.5 L16.5 498 L18 496.5 M12.5 505.5 L9.5 509 M9.5 506.5 V509 H12 M20.5 505.5 L23.5 509 M23.5 506.5 V509 H21" stroke="#3c6cf0" fill="none"/>
<!-- Merge -->
<path d="M9.5 521.5 L16.5 517.5 L23.5 521.5 L16.5 525.5 Z" fill="#d8d8d8" stroke="#404040"/>
<path d="M9.5 514.5 L12.5 518 M10 518 H12.5 V515.5 M23.5 514.5 L20.5 518 M23 518 H20.5 V515.5 M16.5 526 V530 M15 528.5 L16.5 530 L18 528.5" stroke="#3c6cf0" fill="none"/>
<!-- Exception handler -->
<path d="M13 537.5 H22 L12 547.5 H23 M20.5 545.5 L23 547.5 L20.5 549.5" stroke="#404040" fill="none"/>
<!-- Expansion Region -->
<rect x="9.5" y="556.5" width="15" height="12" rx="3" fill="#e8e8c8" stroke="#404040" stroke-dasharray="2 1"/><rect x="12.5" y="555.5" width="8" height="2" fill="#f0f0f0" stroke="#404040"/><rect x="12.5" y="567.5" width="8" height="2" fill="#f0f0f0" stroke="#404040"/><path d="M14.5 555.5 V557.5 M16.5 555.5 V557.5 M18.5 555.5 V557.5 M14.5 567.5 V569.5 M16.5 567.5 V569.5 M18.5 567.5 V569.5" stroke="#404040" fill="none"/>
<!-- Input Pin -->
<rect x="11.5" y="578.5" width="7" height="7" fill="#e8e8c8" stroke="#404040"/><path d="M13 582 H17 M15.5 580.5 L17 582 L15.5 583.5" stroke="#202020" fill="none"/><path d="M24 574.5 Q16 582 24 589.5" stroke="#404040" fill="none"/>
<!-- collapse -->
<path d="M84 604.5 H95 L89.5 598 Z" fill="#404040"/>
</g>
<g id="sbarrows" stroke="#505050" stroke-width="2.2" fill="none">
<path d="M1081 87.5 L1084.5 84 L1088 87.5"/>
<path d="M1081 830 L1084.5 833.5 L1088 830"/>
<path d="M186.5 845 L182.5 848.5 L186.5 852"/>
<path d="M1066 845 L1070 848.5 L1066 852"/>
</g>
<g id="dd" fill="#000"><path d="M163 142 H170 L166.5 145.8 Z"/><path d="M163 162 H170 L166.5 165.8 Z"/><path d="M163 182 H170 L166.5 185.8 Z"/><path d="M163 282 H170 L166.5 285.8 Z"/><path d="M163 321 H170 L166.5 324.8 Z"/><path d="M163 341 H170 L166.5 344.8 Z"/><path d="M163 581 H170 L166.5 584.8 Z"/></g>

</svg>
</body></html>
